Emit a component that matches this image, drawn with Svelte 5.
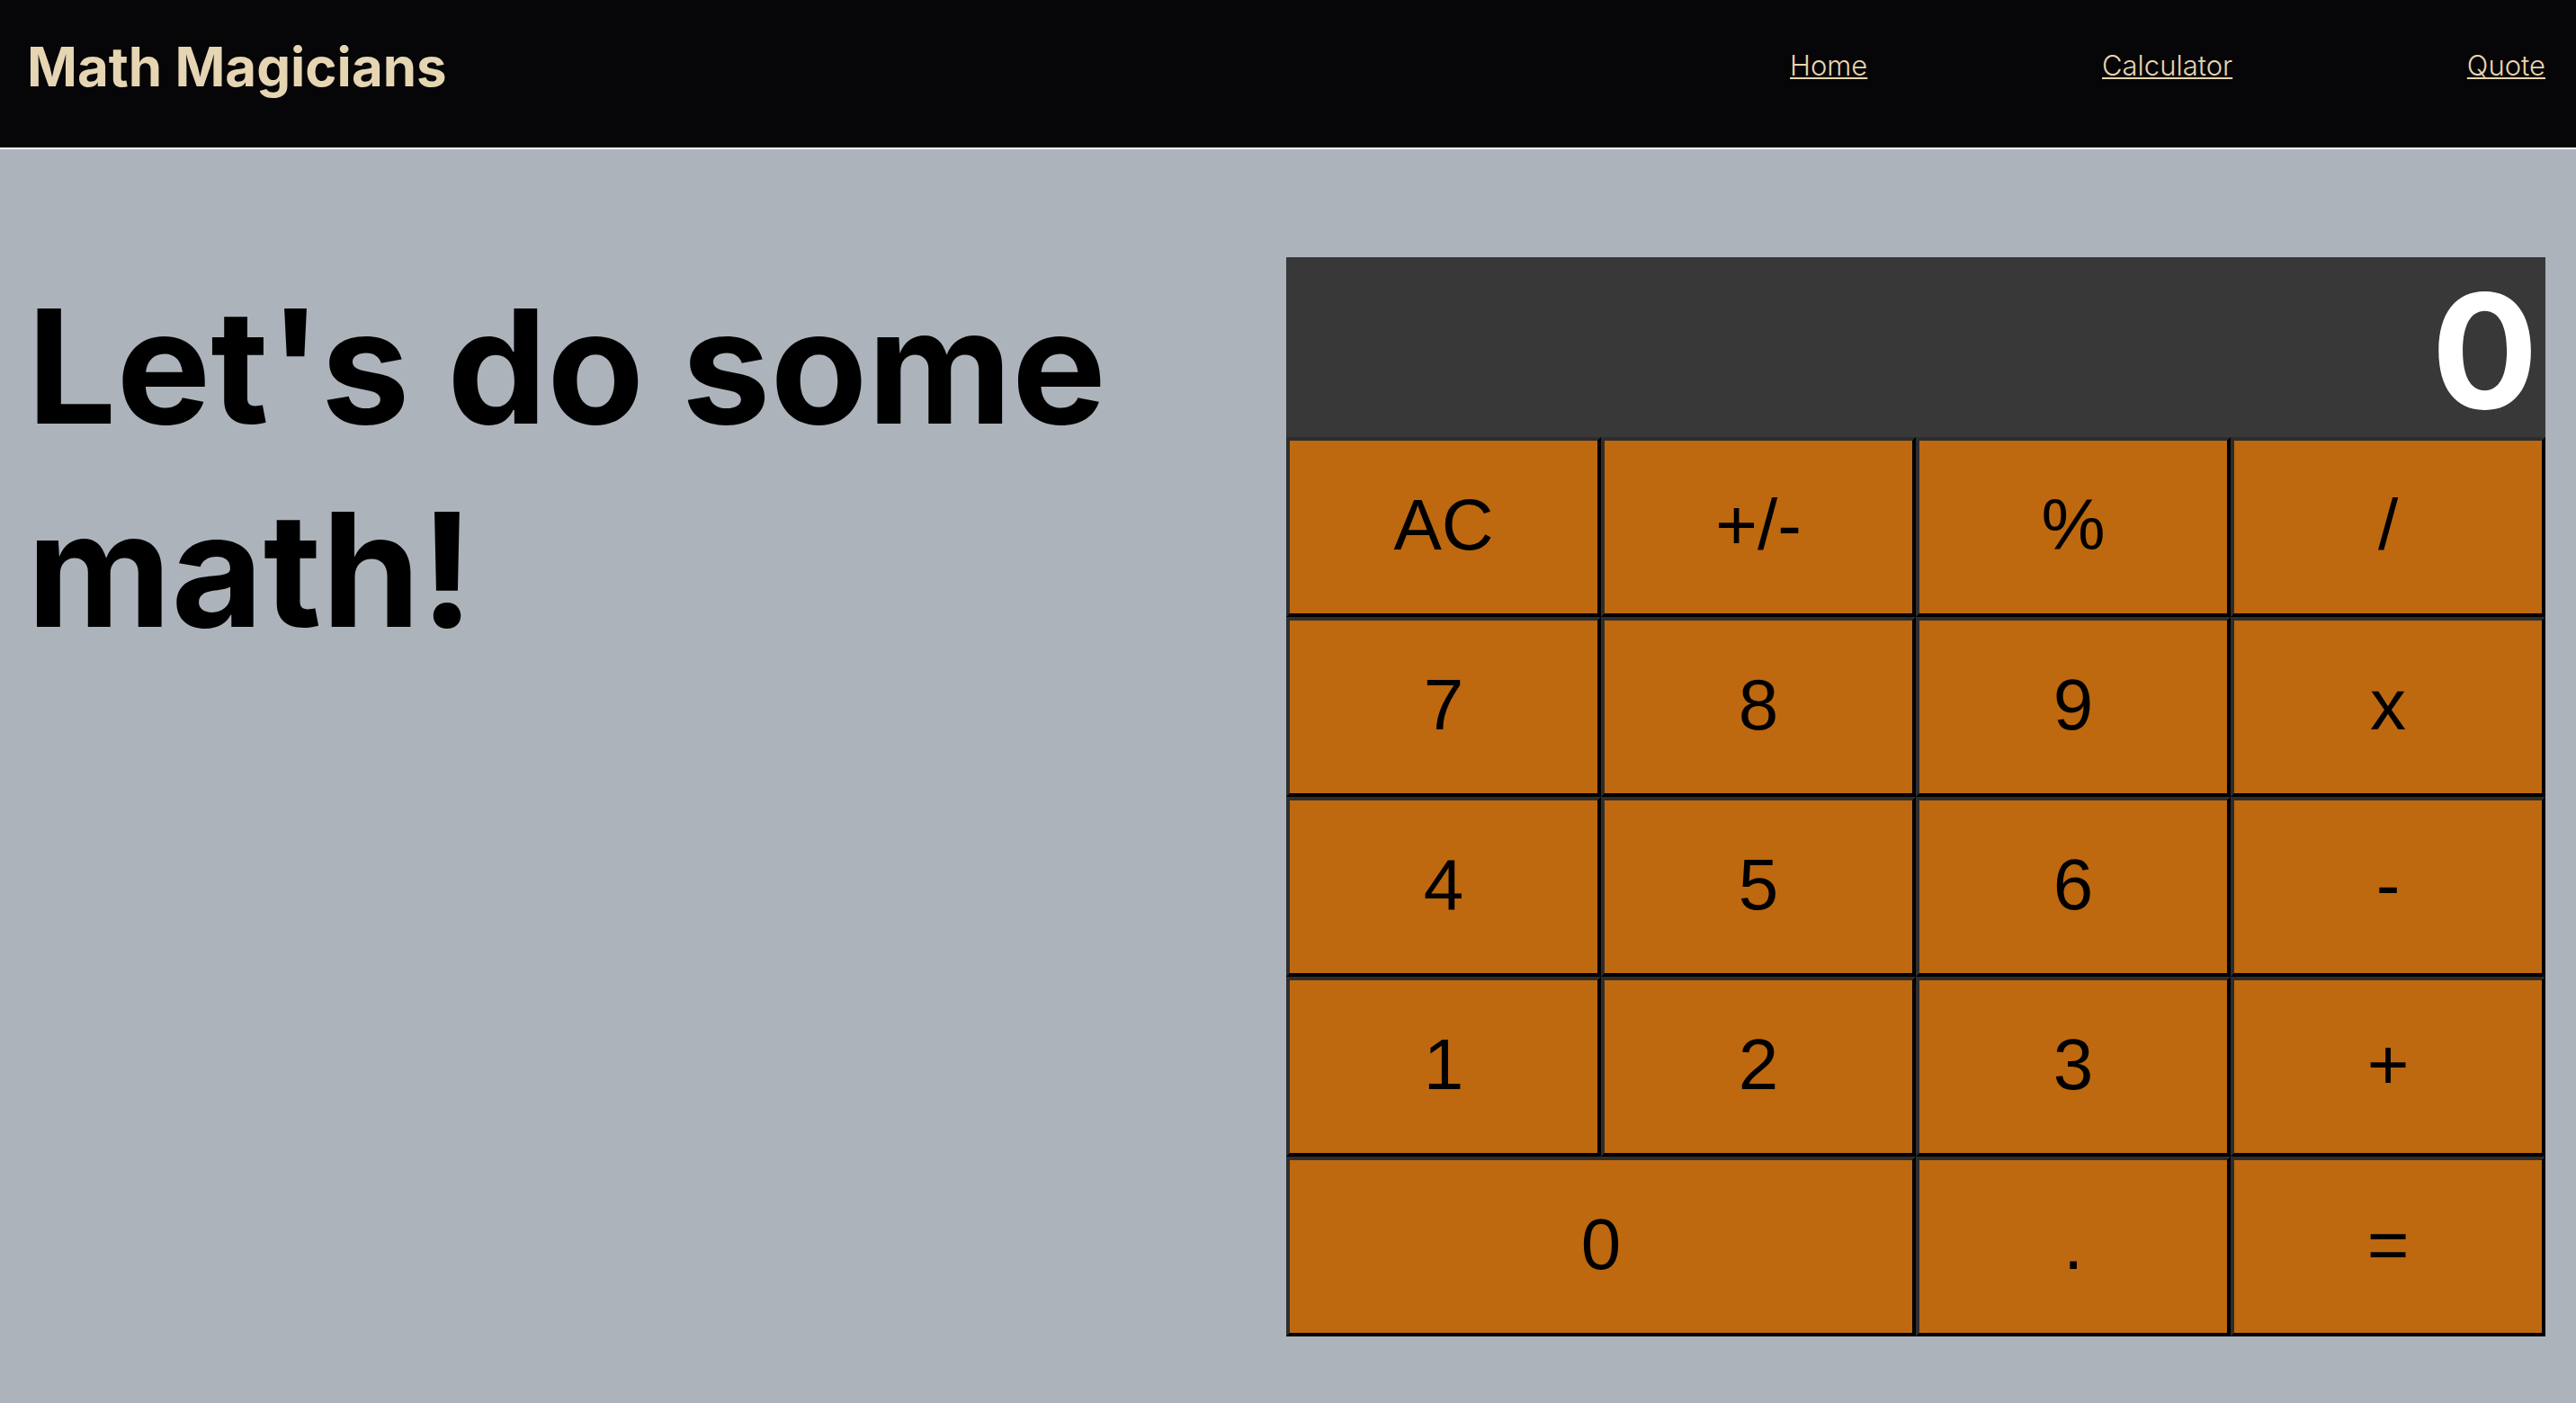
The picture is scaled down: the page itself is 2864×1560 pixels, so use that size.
<script>
  const links = ['Home', 'Calculator', 'Quote'];
  const keys = [
    'AC', '+/-', '%', '/',
    '7', '8', '9', 'x',
    '4', '5', '6', '-',
    '1', '2', '3', '+',
    '0', '.', '=',
  ];

  let shown = $state('0');
  let stored = null;
  let operator = null;
  let fresh = true;

  function compute(a, b, op) {
    if (op === '+') return a + b;
    if (op === '-') return a - b;
    if (op === 'x') return a * b;
    return a / b;
  }

  function press(key) {
    if (key === 'AC') {
      shown = '0';
      stored = null;
      operator = null;
      fresh = true;
    } else if (key === '+/-') {
      shown = String(-Number(shown));
    } else if (key === '%') {
      shown = String(Number(shown) / 100);
    } else if (key === '.') {
      if (fresh) shown = '0.';
      else if (!shown.includes('.')) shown += '.';
      fresh = false;
    } else if (/\d/.test(key)) {
      shown = fresh || shown === '0' ? key : shown + key;
      fresh = false;
    } else {
      if (operator && !fresh) shown = String(compute(stored, Number(shown), operator));
      stored = Number(shown);
      operator = key === '=' ? null : key;
      fresh = true;
    }
  }
</script>

<div class="page">
  <header>
    <h1>Math Magicians</h1>
    <nav>
      {#each links as link}
        <a href={`#${link.toLowerCase()}`}>{link}</a>
      {/each}
    </nav>
  </header>

  <main>
    <h2>Let's do some math!</h2>
    <section class="calculator" aria-label="Calculator">
      <output class="display">{shown}</output>
      {#each keys as key}
        <button type="button" class:wide={key === '0'} onclick={() => press(key)}>{key}</button>
      {/each}
    </section>
  </main>
</div>

<style>
  :global(body) {
    margin: 0;
    background: #acb3bb;
  }

  .page {
    min-height: 100vh;
    font-family: Inter, 'Liberation Sans', sans-serif;
    color: #000;
  }

  header {
    display: flex;
    justify-content: space-between;
    align-items: flex-start;
    padding: 32px 34px 48px 30px;
    border-bottom: 2px solid #fff;
    background: #060608;
    color: #e6d5b2;
  }

  h1 {
    margin: 0;
    font-size: 60px;
    font-weight: 700;
    line-height: 84px;
  }

  nav {
    display: flex;
    justify-content: space-between;
    width: 30%;
  }

  a {
    color: inherit;
    font-size: 31px;
    font-weight: 300;
    line-height: 82px;
    text-decoration-thickness: 2px;
    text-underline-offset: 2px;
  }

  main {
    display: grid;
    grid-template-columns: 1fr 1fr;
    align-items: start;
    padding: 120px 34px 72px 30px;
  }

  h2 {
    margin: 0;
    padding-top: 8px;
    font-size: 176px;
    font-weight: 700;
    line-height: 226px;
  }

  .calculator {
    display: grid;
    grid-template-columns: repeat(4, 1fr);
    grid-auto-rows: 200px;
  }

  .display {
    grid-column: 1 / -1;
    padding: 8px 8px 0;
    background: #383838;
    color: #fff;
    font-size: 176px;
    font-weight: 700;
    line-height: 192px;
    text-align: right;
  }

  button {
    margin: 0;
    padding: 0 0 4px;
    border: 4px solid;
    border-color: #2d2d2d #000 #000 #2d2d2d;
    border-radius: 0;
    background: #be6810;
    color: #000;
    font-family: 'Liberation Sans', Arial, sans-serif;
    font-size: 80px;
    cursor: pointer;
  }

  .wide {
    grid-column: span 2;
  }
</style>
